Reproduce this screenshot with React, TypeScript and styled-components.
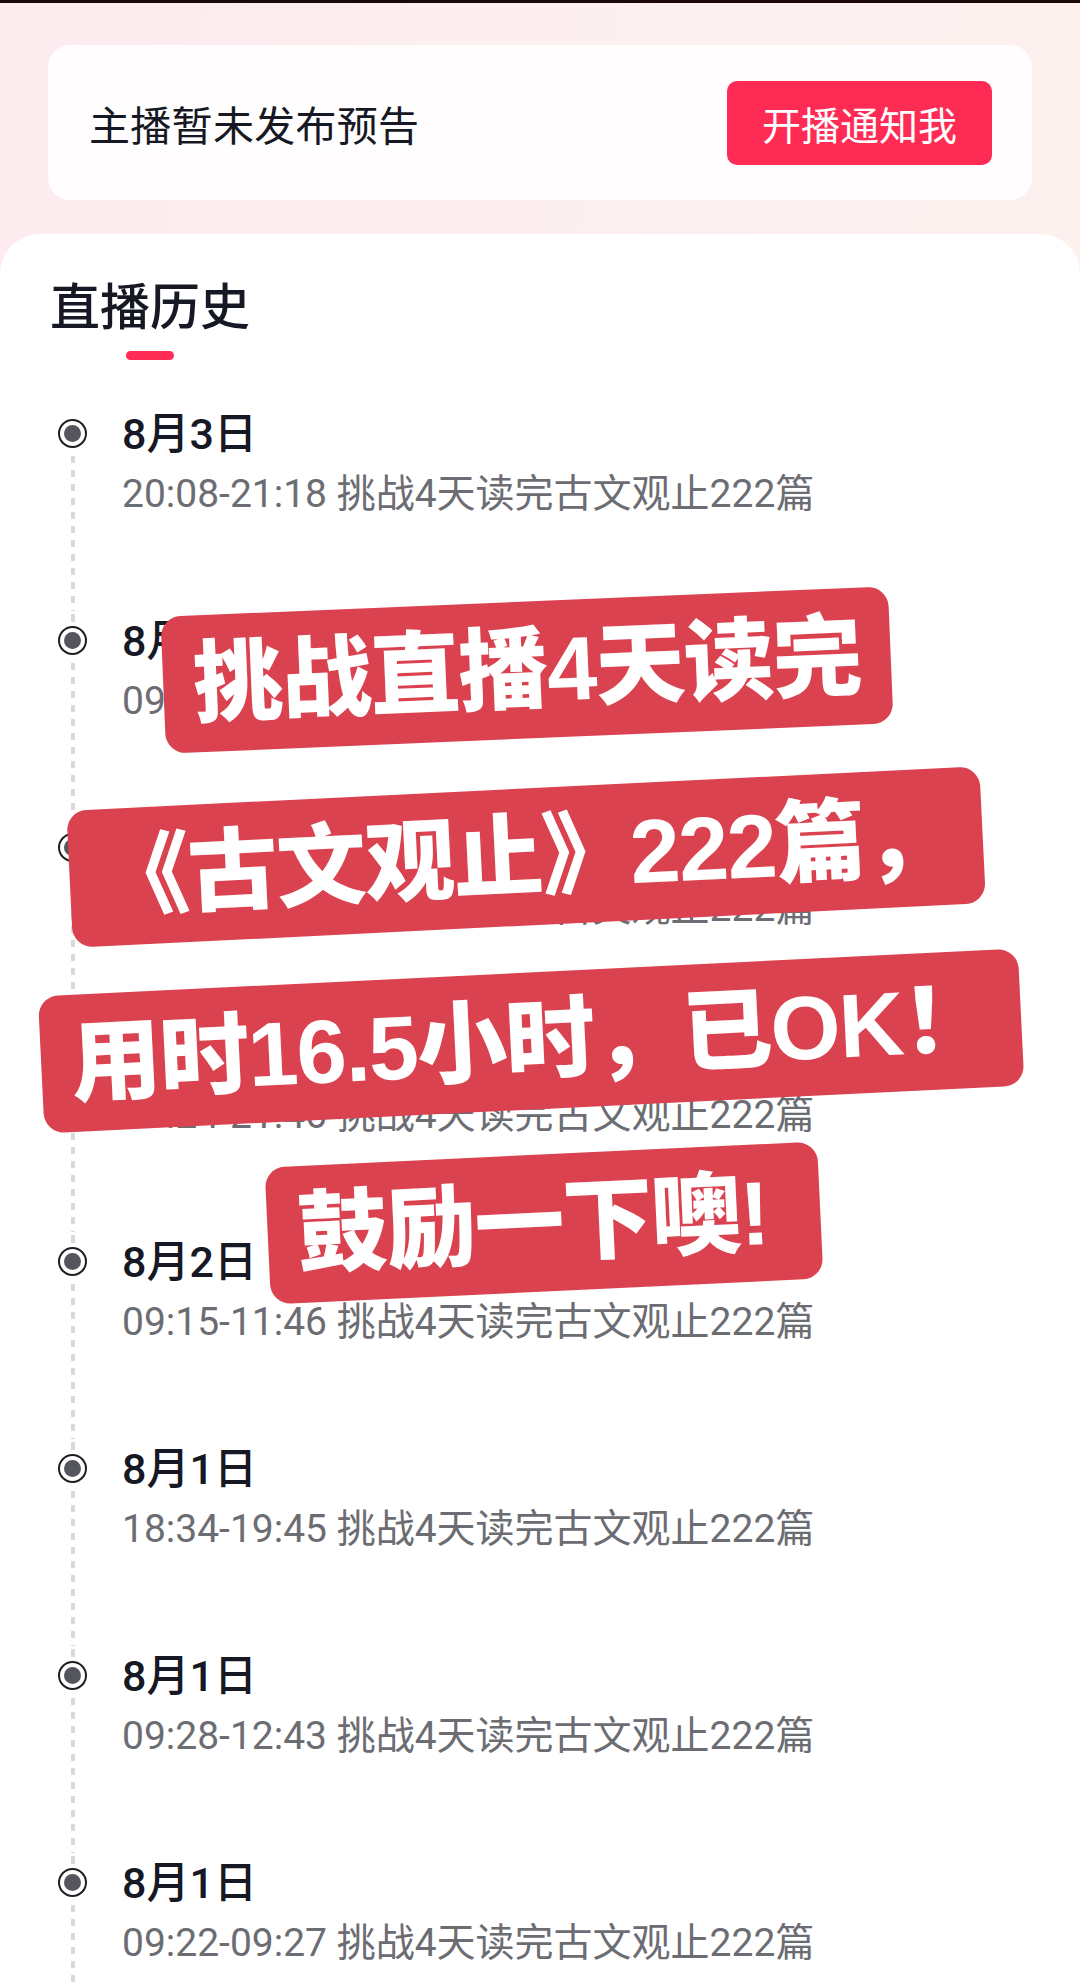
import React from "react";
import styled, { createGlobalStyle } from "styled-components";

const GlobalStyle = createGlobalStyle`
  html, body {
    margin: 0;
    padding: 0;
    background: #ffffff;
    overflow: hidden;
  }
  body {
    font-family: Roboto, "Noto Sans CJK SC", "Noto Sans", sans-serif;
    -webkit-font-smoothing: antialiased;
  }
  * { box-sizing: border-box; }
`;

const Page = styled.div`
  position: relative;
  width: 1080px;
  height: 1986px;
  overflow: hidden;
  background: linear-gradient(100deg, #fdebef 0%, #fdf0f0 50%, #fdf1ee 100%);
`;

const TopEdge = styled.div`
  height: 3px;
  background: #1b0808;
`;

const Header = styled.div`
  padding: 42px 48px 34px;
`;

const NoticeCard = styled.div`
  height: 155px;
  border-radius: 22px;
  background: rgba(255, 255, 255, 0.86);
  display: flex;
  align-items: center;
  justify-content: space-between;
  padding: 0 40px 0 41px;
`;

const NoticeText = styled.span`
  font-family: "Noto Sans CJK SC", sans-serif;
  font-size: 41px;
  color: #161823;
  font-weight: 400;
  letter-spacing: 0.3px;
`;

const NotifyButton = styled.button`
  width: 265px;
  height: 84px;
  border: none;
  border-radius: 10px;
  background: #fe2c55;
  color: #ffffff;
  font-family: "Noto Sans CJK SC", sans-serif;
  font-size: 39px;
  font-weight: 400;
  display: flex;
  align-items: center;
  justify-content: center;
  padding: 0;
`;

const Panel = styled.section`
  background: #ffffff;
  border-radius: 40px 40px 0 0;
  padding: 39px 0 0 50px;
  height: 1760px;
`;

const TitleBlock = styled.div`
  display: inline-flex;
  flex-direction: column;
  align-items: center;
`;

const Title = styled.h2`
  margin: 0;
  font-family: "Noto Sans CJK SC", sans-serif;
  font-size: 50px;
  line-height: 60px;
  font-weight: 500;
  color: #161823;
`;

const TitleMark = styled.div`
  margin-top: 18px;
  width: 48px;
  height: 9px;
  border-radius: 5px;
  background: #fe2c55;
`;

const Timeline = styled.ul`
  list-style: none;
  margin: 44px 0 0;
  padding: 0 0 0 8px;
`;

const Item = styled.li`
  display: flex;
  height: 207px;
`;

const Rail = styled.div`
  width: 29px;
  display: flex;
  flex-direction: column;
  align-items: center;
  flex-shrink: 0;
`;

const dash = `repeating-linear-gradient(to bottom, #d9d9d9 0px, #d9d9d9 7px, transparent 7px, transparent 14px)`;

const RailTop = styled.div<{ $hidden?: boolean }>`
  width: 4px;
  height: 15px;
  background: ${(p) => (p.$hidden ? "transparent" : dash)};
  background-position: 0 4px;
`;

const Dot = styled.div`
  width: 29px;
  height: 29px;
  border-radius: 50%;
  border: 2.5px solid #1e1e22;
  background: #ffffff;
  display: flex;
  align-items: center;
  justify-content: center;
  flex-shrink: 0;
  &::after {
    content: "";
    width: 17px;
    height: 17px;
    border-radius: 50%;
    background: #55565d;
  }
`;

const RailLine = styled.div`
  flex: 1;
  width: 4px;
  margin-top: 8px;
  background: ${dash};
`;

const Content = styled.div`
  margin-left: 35px;
  display: flex;
  flex-direction: column;
`;

const DateText = styled.div`
  font-size: 43px;
  line-height: 60px;
  font-weight: 500;
  color: #161823;
`;

const Detail = styled.div`
  font-size: 39px;
  line-height: 60px;
  color: #6c6d73;
  white-space: nowrap;
`;

const Sticker = styled.div<{ $x: number; $y: number; $rot: number; $padRight: number }>`
  position: absolute;
  left: ${(p) => p.$x}px;
  top: ${(p) => p.$y}px;
  transform: translate(-50%, -50%) rotate(${(p) => p.$rot}deg);
  height: 137px;
  padding: 0 ${(p) => p.$padRight}px 0 30px;
  border-radius: 20px;
  background: #da424f;
  color: #ffffff;
  font-family: "Liberation Sans", "Noto Sans CJK SC", sans-serif;
  font-size: 90px;
  font-weight: 900;
  line-height: 1;
  white-space: nowrap;
  display: flex;
  align-items: center;
  letter-spacing: -1.5px;
`;

const items = [
  { date: "8月3日", time: "20:08-21:18" },
  { date: "8月3日", time: "09:10-12:05" },
  { date: "8月2日", time: "14:10-17:35" },
  { date: "8月2日", time: "19:24-21:46" },
  { date: "8月2日", time: "09:15-11:46" },
  { date: "8月1日", time: "18:34-19:45" },
  { date: "8月1日", time: "09:28-12:43" },
  { date: "8月1日", time: "09:22-09:27" },
];

const stickers = [
  { text: "挑战直播4天读完", x: 527, y: 670, rot: -2.4, pad: 30 },
  { text: "《古文观止》222篇，", x: 526, y: 857, rot: -2.8, pad: 30 },
  { text: "用时16.5小时，已OK！", x: 531, y: 1041, rot: -2.8, pad: 30 },
  { text: "鼓励一下噢!", x: 544, y: 1223, rot: -2.7, pad: 52 },
];

export default function App() {
  return (
    <>
      <GlobalStyle />
      <Page>
        <TopEdge />
        <Header>
          <NoticeCard>
            <NoticeText>主播暂未发布预告</NoticeText>
            <NotifyButton>开播通知我</NotifyButton>
          </NoticeCard>
        </Header>
        <Panel>
          <TitleBlock>
            <Title>直播历史</Title>
            <TitleMark />
          </TitleBlock>
          <Timeline>
            {items.map((it, i) => (
              <Item key={i}>
                <Rail>
                  <RailTop $hidden={i === 0} />
                  <Dot />
                  <RailLine />
                </Rail>
                <Content>
                  <DateText>{it.date}</DateText>
                  <Detail>{it.time} 挑战4天读完古文观止222篇</Detail>
                </Content>
              </Item>
            ))}
          </Timeline>
        </Panel>
        {stickers.map((s, i) => (
          <Sticker key={i} $x={s.x} $y={s.y} $rot={s.rot} $padRight={s.pad}>
            {s.text}
          </Sticker>
        ))}
      </Page>
    </>
  );
}
